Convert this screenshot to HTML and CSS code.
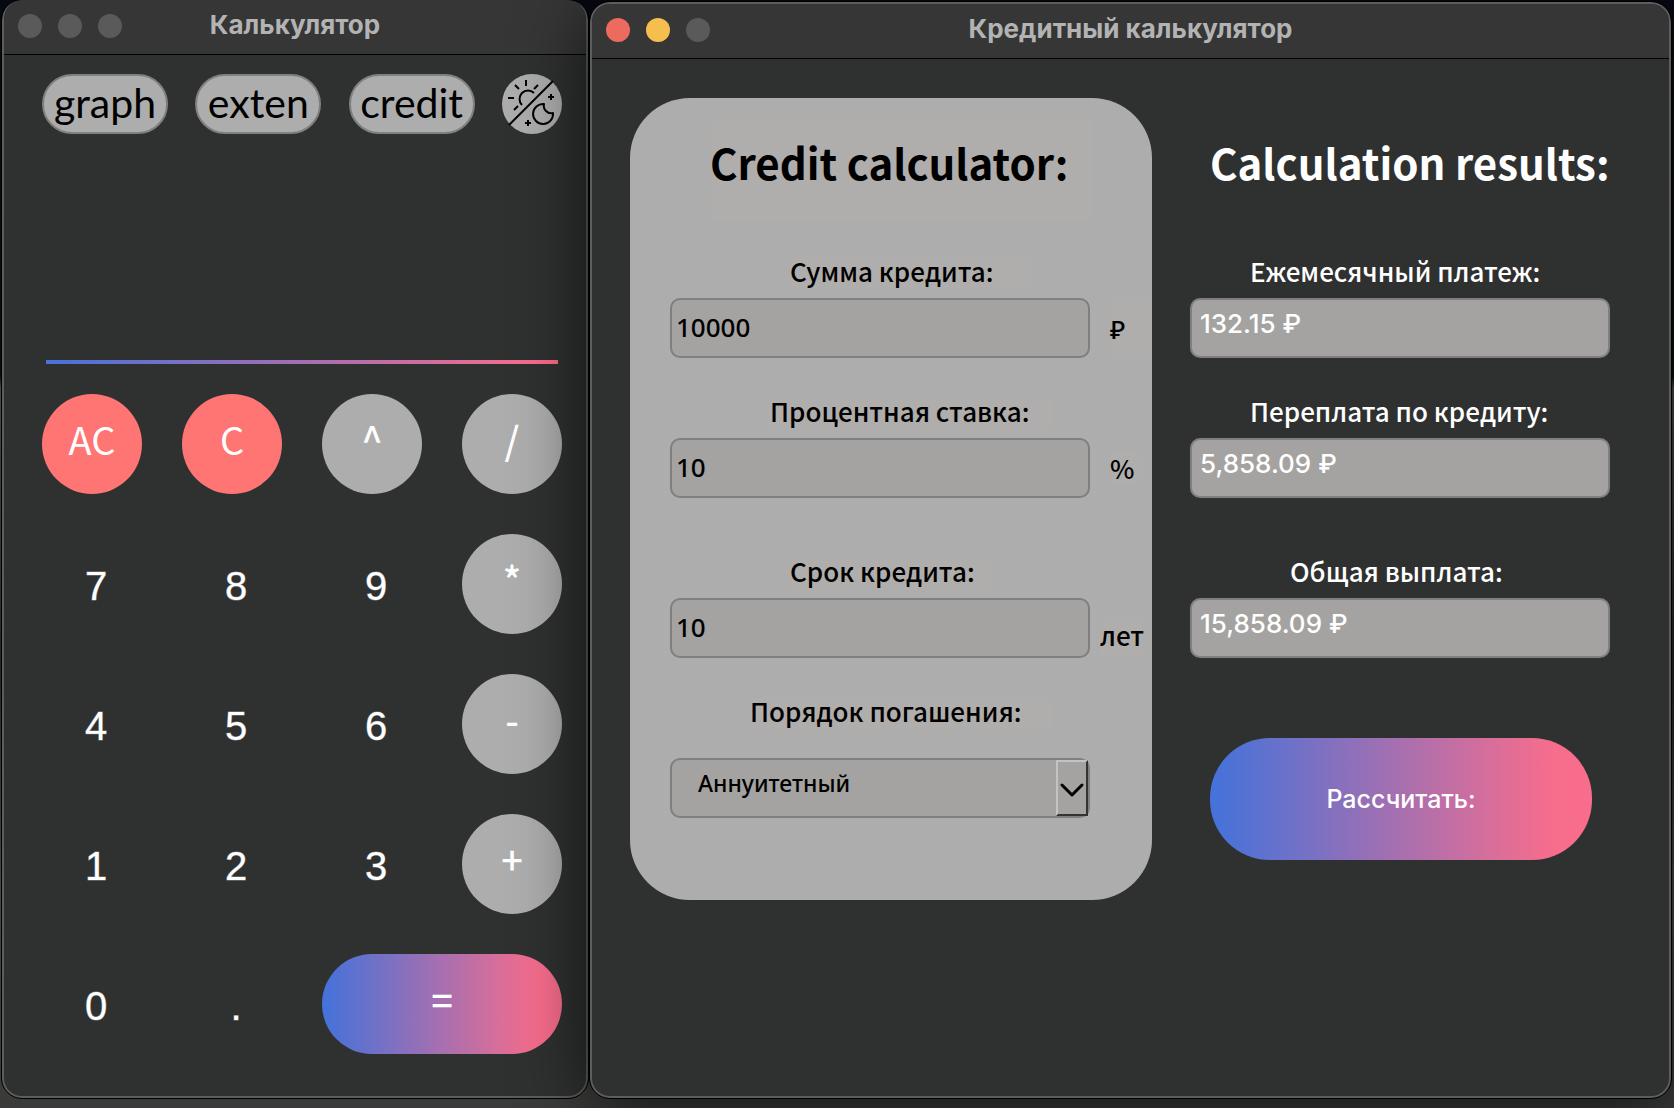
FILE: index.html
```html
<!DOCTYPE html>
<html lang="ru">
<head>
<meta charset="utf-8">
<title>Калькулятор</title>
<link rel="stylesheet" href="styles.css">
</head>
<body>
<main class="desktop">
  <section class="window window-calc">
    <header class="titlebar">
      <div class="lights"><i class="light"></i><i class="light"></i><i class="light"></i></div>
      <h1 class="window-title">Калькулятор</h1>
    </header>
    <div class="calc-body">
      <nav class="modes">
        <button class="mode">graph</button>
        <button class="mode">exten</button>
        <button class="mode">credit</button>
        <button class="theme" aria-label="Тема">
          <svg viewBox="0 0 60 60" fill="none" stroke="#000" stroke-width="2">
            <path d="M7 51L51 7"/>
            <path d="M32 19A8 8 0 1 0 20 31"/>
            <path d="M24 6v6M13 11l4 4M36 11l-4 4M6 24h6M12 36l4-4"/>
            <path d="M42 30A10 10 0 1 0 51 39A7.500 7.500 0 0 1 42 30Z" stroke-linejoin="round"/>
            <path d="M49 20v6M46 23h6M26 46v6M23 49h6"/>
          </svg>
        </button>
      </nav>
      <output class="display"></output>
      <div class="keys">
        <button class="key key-clear">AC</button>
        <button class="key key-clear">C</button>
        <button class="key key-op">^</button>
        <button class="key key-op">/</button>
        <button class="key key-digit">7</button>
        <button class="key key-digit">8</button>
        <button class="key key-digit">9</button>
        <button class="key key-op">*</button>
        <button class="key key-digit">4</button>
        <button class="key key-digit">5</button>
        <button class="key key-digit">6</button>
        <button class="key key-op">-</button>
        <button class="key key-digit">1</button>
        <button class="key key-digit">2</button>
        <button class="key key-digit">3</button>
        <button class="key key-op">+</button>
        <button class="key key-digit">0</button>
        <button class="key key-digit">.</button>
        <button class="key key-equals">=</button>
      </div>
    </div>
  </section>

  <section class="window window-credit">
    <header class="titlebar">
      <div class="lights"><i class="light light-close"></i><i class="light light-min"></i><i class="light"></i></div>
      <h1 class="window-title">Кредитный калькулятор</h1>
    </header>
    <div class="credit-body">
      <form class="card">
        <h2 class="heading heading-card">Credit calculator:</h2>
        <div class="field">
          <label class="label label-sum" for="sum">Сумма кредита:</label>
          <div class="row"><input class="box" id="sum" value="10000"><span class="unit unit-rub">₽</span></div>
        </div>
        <div class="field">
          <label class="label label-rate" for="rate">Процентная ставка:</label>
          <div class="row"><input class="box" id="rate" value="10"><span class="unit">%</span></div>
        </div>
        <div class="field field-spaced">
          <label class="label label-term" for="term">Срок кредита:</label>
          <div class="row"><input class="box" id="term" value="10"><span class="unit unit-years">лет</span></div>
        </div>
        <div class="field field-order">
          <label class="label label-order" for="order">Порядок погашения:</label>
          <div class="row">
            <div class="combo">
              <select class="box box-select" id="order"><option>Аннуитетный</option></select>
              <span class="arrow"><svg viewBox="0 0 28 52" fill="none" stroke="#000" stroke-width="3" stroke-linecap="round" stroke-linejoin="round"><path d="M4 23L14 33L24 23"/></svg></span>
            </div>
          </div>
        </div>
      </form>
      <div class="results">
        <h2 class="heading">Calculation results:</h2>
        <div class="field">
          <label class="label" for="monthly">Ежемесячный платеж:</label>
          <output class="box box-result" id="monthly">132.15 ₽</output>
        </div>
        <div class="field">
          <label class="label" for="over">Переплата по кредиту:</label>
          <output class="box box-result" id="over">5,858.09 ₽</output>
        </div>
        <div class="field field-spaced">
          <label class="label label-total" for="total">Общая выплата:</label>
          <output class="box box-result" id="total">15,858.09 ₽</output>
        </div>
        <button class="submit">Рассчитать:</button>
      </div>
    </div>
  </section>
</main>
</body>
</html>
```
FILE: styles.css
```css
* { box-sizing: border-box; }

body {
  margin: 0;
  background: linear-gradient(#060812 0, #0a0d18 34%, #4a4a48 35%, #262626 60%, #484846 80%, #3a3a39 100%);
}

button, input, select { margin: 0; padding: 0; border: 0; font: inherit; color: inherit; }

.desktop {
  display: grid;
  grid-template-columns: 586fr 1081fr;
  gap: 2px;
  min-height: 100vh;
  padding: 0 3px 10px 2px;
}

.window {
  display: flex;
  flex-direction: column;
  border: 2px solid #5c5d5d;
  border-radius: 20px;
  background: #2f3130;
  outline: 1px solid #000;
  overflow: hidden;
}

.window-calc { border-top-width: 0; }

.window-credit {
  margin-top: 2px;
  z-index: 1;
  box-shadow: 0 10px 70px rgba(0, 0, 0, 0.7);
}

.titlebar {
  display: grid;
  grid-template-columns: 1fr auto 1fr;
  align-items: center;
  height: 55px;
  padding: 0 14px 3px;
  border-bottom: 1px solid #000;
  background: #363636;
}

.lights { display: flex; gap: 16px; }

.light { width: 24px; height: 24px; border-radius: 50%; background: #5a5a5a; }
.light-close { background: #ec6a5e; }
.light-min { background: #f4bf4f; }

.window-title {
  margin: 0;
  padding-bottom: 2px;
  font: 700 26px/32px Inter, sans-serif;
  color: #b3b3b3;
}

.calc-body { padding: 19px 24px 40px 38px; }

.modes { display: flex; justify-content: space-between; }

.mode {
  width: 126px;
  height: 60px;
  padding-bottom: 2px;
  border: 2px solid #808080;
  border-radius: 30px;
  background: #adadad;
  font: 41px/52px Lato, sans-serif;
  color: #000;
}

.theme { width: 60px; height: 60px; border-radius: 50%; background: #adadad; }
.theme svg { display: block; }

.display {
  display: block;
  height: 230px;
  margin: 0 4px 30px;
  border-bottom: 4px solid;
  border-image: linear-gradient(90deg, #4772d9, #ff6c8a) 1;
}

.keys {
  display: grid;
  grid-template-columns: repeat(4, 100px);
  justify-content: space-between;
  row-gap: 40px;
}

.key { height: 100px; border-radius: 50px; color: #fff; }

.key-clear, .key-op, .key-equals {
  padding-bottom: 10px;
  font: 500 38px/50px "Noto Sans CJK SC", "Noto Sans", sans-serif;
}

.key-clear { background: #ff7573; font-weight: 400; }
.key-op { background: #adadad; }

.key-digit {
  padding: 4px 0 0 8px;
  background: none;
  font: 40px/46px "Liberation Sans", Arial, sans-serif;
  -webkit-text-stroke: 1px rgba(255, 255, 255, 0.4);
}

.key-equals { grid-column: span 2; }

.key-equals, .submit { background: linear-gradient(90deg, #4772d9 2%, #f86d8c 90%); }

.credit-body {
  display: grid;
  grid-template-columns: minmax(0, 522fr) minmax(0, 420fr);
  column-gap: 38px;
  padding: 39px 59px 0 38px;
  font: 500 26px/32px "Noto Sans CJK SC", "Noto Sans", sans-serif;
}

.card {
  padding: 20px 0 42px 40px;
  border-radius: 60px;
  background: #adadad;
  color: #000;
}

.heading {
  height: 102px;
  margin: 0 0 38px;
  font: 700 42px/88px "Noto Sans CJK SC", "Noto Sans", sans-serif;
  white-space: nowrap;
}

.heading-card { width: 382px; margin-left: 40px; background: #b0aeac; }

.field { margin-bottom: 40px; }
.field-spaced { margin-top: 60px; }

.label { display: block; height: 32px; margin-bottom: 8px; line-height: 26px; white-space: nowrap; }
.card .label { background: #b0aeac; }
.card .label-sum { width: 242px; margin-left: 120px; }
.card .label-rate { width: 282px; margin-left: 100px; }
.card .label-term { width: 202px; margin-left: 120px; }
.card .label-order { width: 302px; margin: 0 0 28px 80px; }

.row { display: grid; grid-template-columns: 420fr 62fr; }

.box {
  display: block;
  width: 100%;
  height: 60px;
  padding: 0 4px 2px;
  border: 2px solid #7f7f7f;
  border-radius: 10px;
  background: #a4a3a1;
  font: 500 26px/56px "Noto Sans", sans-serif;
}

.unit { justify-self: end; align-self: center; width: 32px; margin-right: 10px; background: #b0aeac; }
.unit-rub { width: 42px; height: 60px; margin-right: 0; line-height: 60px; }
.unit-years { width: 42px; height: 40px; align-self: end; line-height: 34px; }

.combo { display: grid; }
.combo > * { grid-area: 1 / 1; }

.box-select { padding: 0 26px 10px; appearance: none; font-size: 23px; line-height: 46px; }

.arrow {
  justify-self: end;
  width: 32px;
  height: 56px;
  margin: 2px;
  border: 2px solid;
  border-color: #c4c3c1 #333 #333 #c4c3c1;
  background: #a4a3a1;
  pointer-events: none;
}
.arrow svg { display: block; }

.results { padding-top: 20px; color: #fff; }
.results .heading { margin-left: 20px; white-space: nowrap; }
.results .label { margin-left: 60px; }
.results .label-total { margin-left: 100px; }

.box-result { padding: 0 8px; font: 500 26px/48px Inter, sans-serif; }

.submit {
  width: 382px;
  height: 122px;
  margin: 40px 0 0 20px;
  border-radius: 60px;
  font: 500 25px/32px Inter, sans-serif;
}
```
